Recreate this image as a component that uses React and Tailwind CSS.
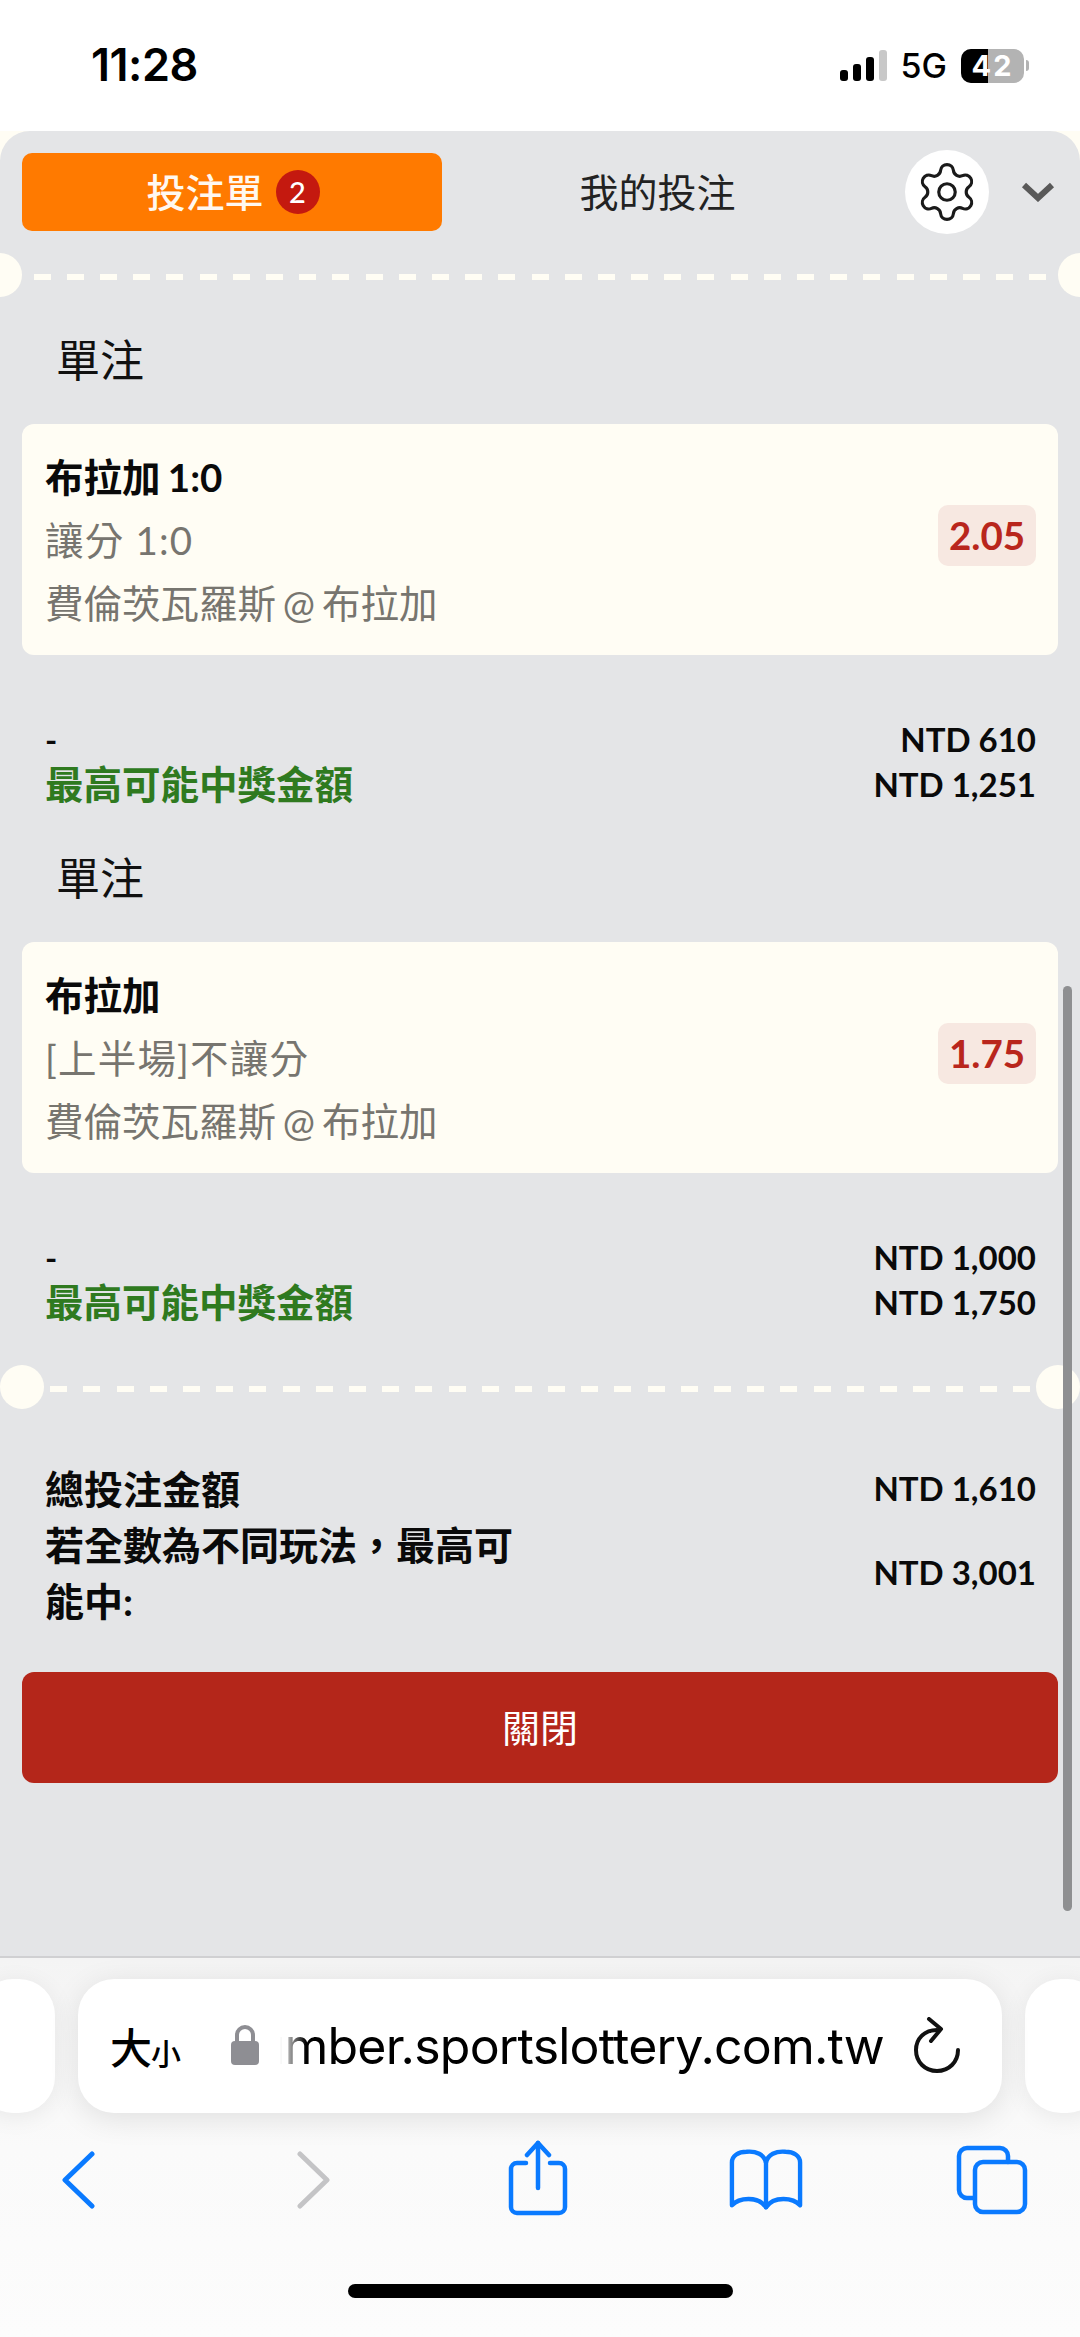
import React from "react";
import { Settings } from "lucide-react";

const FONT = "font-['Lato','Noto_Sans_CJK_TC',sans-serif]";

function Dashes({ count }) {
  return (
    <div className="flex gap-[16.2px] mt-[4px]">
      {Array.from({ length: count }).map((_, i) => (
        <span key={i} className="block w-[17px] h-[6px] bg-[#fffdf4]" />
      ))}
    </div>
  );
}

function Divider({ count, outer, top }) {
  return (
    <div className={`flex items-center justify-between h-[44px] ${top}`}>
      <span className={`block w-[44px] h-[44px] rounded-full bg-[#fffdf4] ${outer ? "-ml-[22px]" : ""}`} />
      <Dashes count={count} />
      <span className={`block w-[44px] h-[44px] rounded-full bg-[#fffdf4] ${outer ? "-mr-[22px]" : ""}`} />
    </div>
  );
}

function Bet({ title, market, odds, stake, prize }) {
  return (
    <section className="h-[518px]">
      <h2 className="h-[72px] pl-[56px] flex items-center text-[44px] font-normal text-[#111]">單注</h2>
      <div className="mt-[28px] mx-[22px] h-[231px] rounded-[12px] bg-[#fffdf4] pl-[23px] pr-[22px] pt-[3px] flex items-center justify-between">
        <div className="flex flex-col">
          <div className="h-[63px] flex items-center text-[38.5px] font-bold text-[#0a0a0a] [word-spacing:-2px]">{title}</div>
          <div className="h-[63px] flex items-center text-[38.5px] tracking-[1.2px] text-[#77756f]">{market}</div>
          <div className="h-[63px] flex items-center text-[38.5px] text-[#77756f] [word-spacing:-3px]">費倫茨瓦羅斯 @ 布拉加</div>
        </div>
        <div className="w-[98px] h-[61px] -mt-[11px] rounded-[10px] bg-[#f7e8e1] flex items-center justify-center text-[38.5px] font-bold text-[#b9261c]">
          {odds}
        </div>
      </div>
      <div className="mt-[62px] ml-[45px] mr-[44px]">
        <div className="h-[45px] flex items-center justify-between text-[33px] font-bold text-[#0a0a0a]">
          <span>-</span>
          <span>{stake}</span>
        </div>
        <div className="h-[45px] flex items-center justify-between font-bold">
          <span className="text-[38.5px] text-[#2f7a1f]">最高可能中獎金額</span>
          <span className="text-[33px] text-[#0a0a0a]">{prize}</span>
        </div>
      </div>
    </section>
  );
}

function StatusBar() {
  return (
    <header className="h-[131px] shrink-0 bg-white flex items-center justify-between pl-[91px] pr-[51px] font-['Inter',sans-serif] text-black">
      <span className="text-[45px] font-semibold tracking-[-0.5px] -mt-[1px]">11:28</span>
      <div className="flex items-center">
        <svg width="47" height="31" viewBox="0 0 47 31">
          <rect x="0" y="20" width="8" height="11" rx="3" fill="#000" />
          <rect x="13" y="14" width="8" height="17" rx="3" fill="#000" />
          <rect x="26" y="7" width="8" height="24" rx="3" fill="#000" />
          <rect x="39" y="0" width="8" height="31" rx="3" fill="#c8c8c8" />
        </svg>
        <span className="ml-[14px] text-[34px] font-medium leading-none">5G</span>
        <div className="ml-[14px] relative w-[63px] h-[34px] rounded-[10px] overflow-hidden flex bg-[#b3b3b3]">
          <span className="block w-[27px] h-full bg-black" />
          <span className="absolute inset-0 flex items-center justify-center text-white text-[29px] font-bold tracking-[2px]">42</span>
        </div>
        <span className="ml-[2px] block w-[3px] h-[11px] rounded-r-full bg-[#b3b3b3]" />
      </div>
    </header>
  );
}

function Tabs() {
  return (
    <div className="h-[100px] flex items-center pl-[22px] mt-[11px]">
      <div className="w-[420px] h-[78px] rounded-[10px] bg-[#ff7a00] flex items-center justify-center gap-[12px]">
        <span className="ml-[2px] text-[39px] font-medium text-[#fff8f0]">投注單</span>
        <span className="w-[44px] h-[44px] rounded-full bg-[#c4190f] flex items-center justify-center text-white text-[29px] font-medium">2</span>
      </div>
      <div className="w-[431px] text-center text-[39px] text-[#222]">我的投注</div>
      <div className="ml-[32px] w-[84px] h-[84px] rounded-full bg-white flex items-center justify-center">
        <Settings size={66} strokeWidth={1.15} color="#1a1a1a" />
      </div>
      <svg className="ml-[32px]" width="34" height="20" viewBox="0 0 34 20" fill="none">
        <path d="M3 3 L17 16 L31 3" stroke="#595959" strokeWidth="6" />
      </svg>
    </div>
  );
}

function Totals() {
  return (
    <div className="mt-[52px] ml-[45px] mr-[44px] font-bold text-[#0a0a0a]">
      <div className="h-[56px] flex items-center justify-between">
        <span className="text-[39px]">總投注金額</span>
        <span className="text-[33px]">NTD 1,610</span>
      </div>
      <div className="h-[112px] flex items-center justify-between">
        <span className="w-[480px] text-[39px] leading-[56px]">若全數為不同玩法，最高可能中:</span>
        <span className="text-[33px]">NTD 3,001</span>
      </div>
    </div>
  );
}

function Toolbar() {
  return (
    <footer className="relative flex-1 bg-gradient-to-b from-[#f4f4f4] via-[#fafafa] to-[#fcfcfc] font-['Inter',sans-serif]">
      <div className="flex items-center gap-[23px] pt-[21px] -ml-[23px]">
        <div className="w-[78px] h-[134px] rounded-[36px] bg-white shadow-[0_4px_24px_rgba(0,0,0,0.07)] shrink-0" />
        <div className="w-[924px] h-[134px] rounded-[36px] bg-white shadow-[0_6px_30px_rgba(0,0,0,0.10)] shrink-0 flex items-center pl-[32px] relative">
          <span className="w-[76px] flex items-end text-black font-['Noto_Sans_CJK_TC',sans-serif] font-medium leading-none">
            <span className="text-[42px]">大</span>
            <span className="text-[30px] -ml-[1px]">小</span>
          </span>
          <svg className="ml-[45px] -mt-[2px] shrink-0" width="28" height="40" viewBox="0 0 28 40">
            <path d="M6 18 V10 a8 8 0 0 1 16 0 V18" fill="none" stroke="#8e8e93" strokeWidth="4" />
            <rect x="0" y="16" width="28" height="24" rx="4" fill="#8e8e93" />
          </svg>
          <div className="relative ml-[21px] w-[604px] overflow-hidden flex justify-end">
            <span className="text-[50px] text-black whitespace-nowrap tracking-[-0.8px] leading-[64px]">number.sportslottery.com.tw</span>
            <span className="absolute left-0 top-0 bottom-0 w-[26px] bg-gradient-to-r from-white to-transparent" />
          </div>
          <svg className="ml-[30px] -mt-[2px] shrink-0" width="46" height="56" viewBox="0 0 46 56" fill="none" stroke="#111" strokeWidth="4" strokeLinecap="round" strokeLinejoin="round">
            <path d="M23 13 C10 13 2 22 2 33 C2 45 11 54 23 54 C35 54 44 45 44 33" />
            <path d="M15 2 L27 12 L17 24" />
          </svg>
        </div>
        <div className="w-[78px] h-[134px] rounded-[36px] bg-white shadow-[0_4px_24px_rgba(0,0,0,0.07)] shrink-0" />
      </div>
      <div className="flex items-start h-[76px] mt-[27px]">
        <svg className="ml-[61px] mt-[11px] shrink-0" width="34" height="58" viewBox="0 0 34 58" fill="none" stroke="#0a7aff" strokeWidth="5" strokeLinecap="round" strokeLinejoin="round">
          <path d="M31 3 L4 29 L31 55" />
        </svg>
        <svg className="ml-[202px] mt-[11px] shrink-0" width="34" height="58" viewBox="0 0 34 58" fill="none" stroke="#c4c4c6" strokeWidth="5" strokeLinecap="round" strokeLinejoin="round">
          <path d="M3 3 L30 29 L3 55" />
        </svg>
        <svg className="ml-[177px] shrink-0" width="60" height="76" viewBox="0 0 60 76" fill="none" stroke="#0a7aff" strokeWidth="4.5" strokeLinecap="round" strokeLinejoin="round">
          <path d="M18 23 H9 a6 6 0 0 0 -6 6 V67 a6 6 0 0 0 6 6 H51 a6 6 0 0 0 6 -6 V29 a6 6 0 0 0 -6 -6 H42" />
          <path d="M30 48 V3" />
          <path d="M19 15 L30 3 L41 15" />
        </svg>
        <svg className="ml-[161px] mt-[8px] shrink-0" width="74" height="62" viewBox="0 0 76 62" fill="none" stroke="#0a7aff" strokeWidth="4.5" strokeLinecap="round" strokeLinejoin="round">
          <path d="M38 14 C36 6 28 2 18 3 C10 3 3 7 3 14 V58 C10 50 30 48 38 60 C46 48 66 50 73 58 V14 C73 7 66 3 58 3 C48 2 40 6 38 14 Z" />
          <path d="M38 14 V60" />
        </svg>
        <svg className="ml-[153px] mt-[5px] shrink-0" width="72" height="70" viewBox="0 0 72 70" fill="none" stroke="#0a7aff" strokeWidth="4.5" strokeLinecap="round" strokeLinejoin="round">
          <path d="M17 53 H11 a8 8 0 0 1 -8 -8 V11 a8 8 0 0 1 8 -8 H44 a8 8 0 0 1 8 8 V17" />
          <rect x="19" y="17" width="50" height="50" rx="8" />
        </svg>
      </div>
      <div className="mx-auto mt-[68px] w-[385px] h-[14px] rounded-full bg-black" />
    </footer>
  );
}

export default function App() {
  return (
    <div className={`relative w-[1080px] h-[2337px] overflow-hidden bg-white flex flex-col ${FONT}`}>
      <StatusBar />
      <div className="h-[1827px] shrink-0 bg-[#fffdf4]">
        <main className="relative h-full rounded-t-[30px] bg-[#e4e5e7] border-b-[2px] border-[#d0d0d2] flex flex-col">
          <Tabs />
          <Divider count={31} outer top="mt-[11px]" />
          <div className="mt-[27px]">
            <Bet title="布拉加 1:0" market="讓分 1:0" odds="2.05" stake="NTD 610" prize="NTD 1,251" />
            <Bet title="布拉加" market="[上半場]不讓分" odds="1.75" stake="NTD 1,000" prize="NTD 1,750" />
          </div>
          <Divider count={30} top="mt-[5px]" />
          <Totals />
          <div className="mt-[43px] mx-[22px] h-[111px] rounded-[12px] bg-[#b4261a] flex items-center justify-center text-[38px] text-white">關閉</div>
          <span className="absolute right-[8px] top-[855px] w-[9px] h-[925px] rounded-full bg-[#8e8f91]" />
        </main>
      </div>
      <Toolbar />
    </div>
  );
}
